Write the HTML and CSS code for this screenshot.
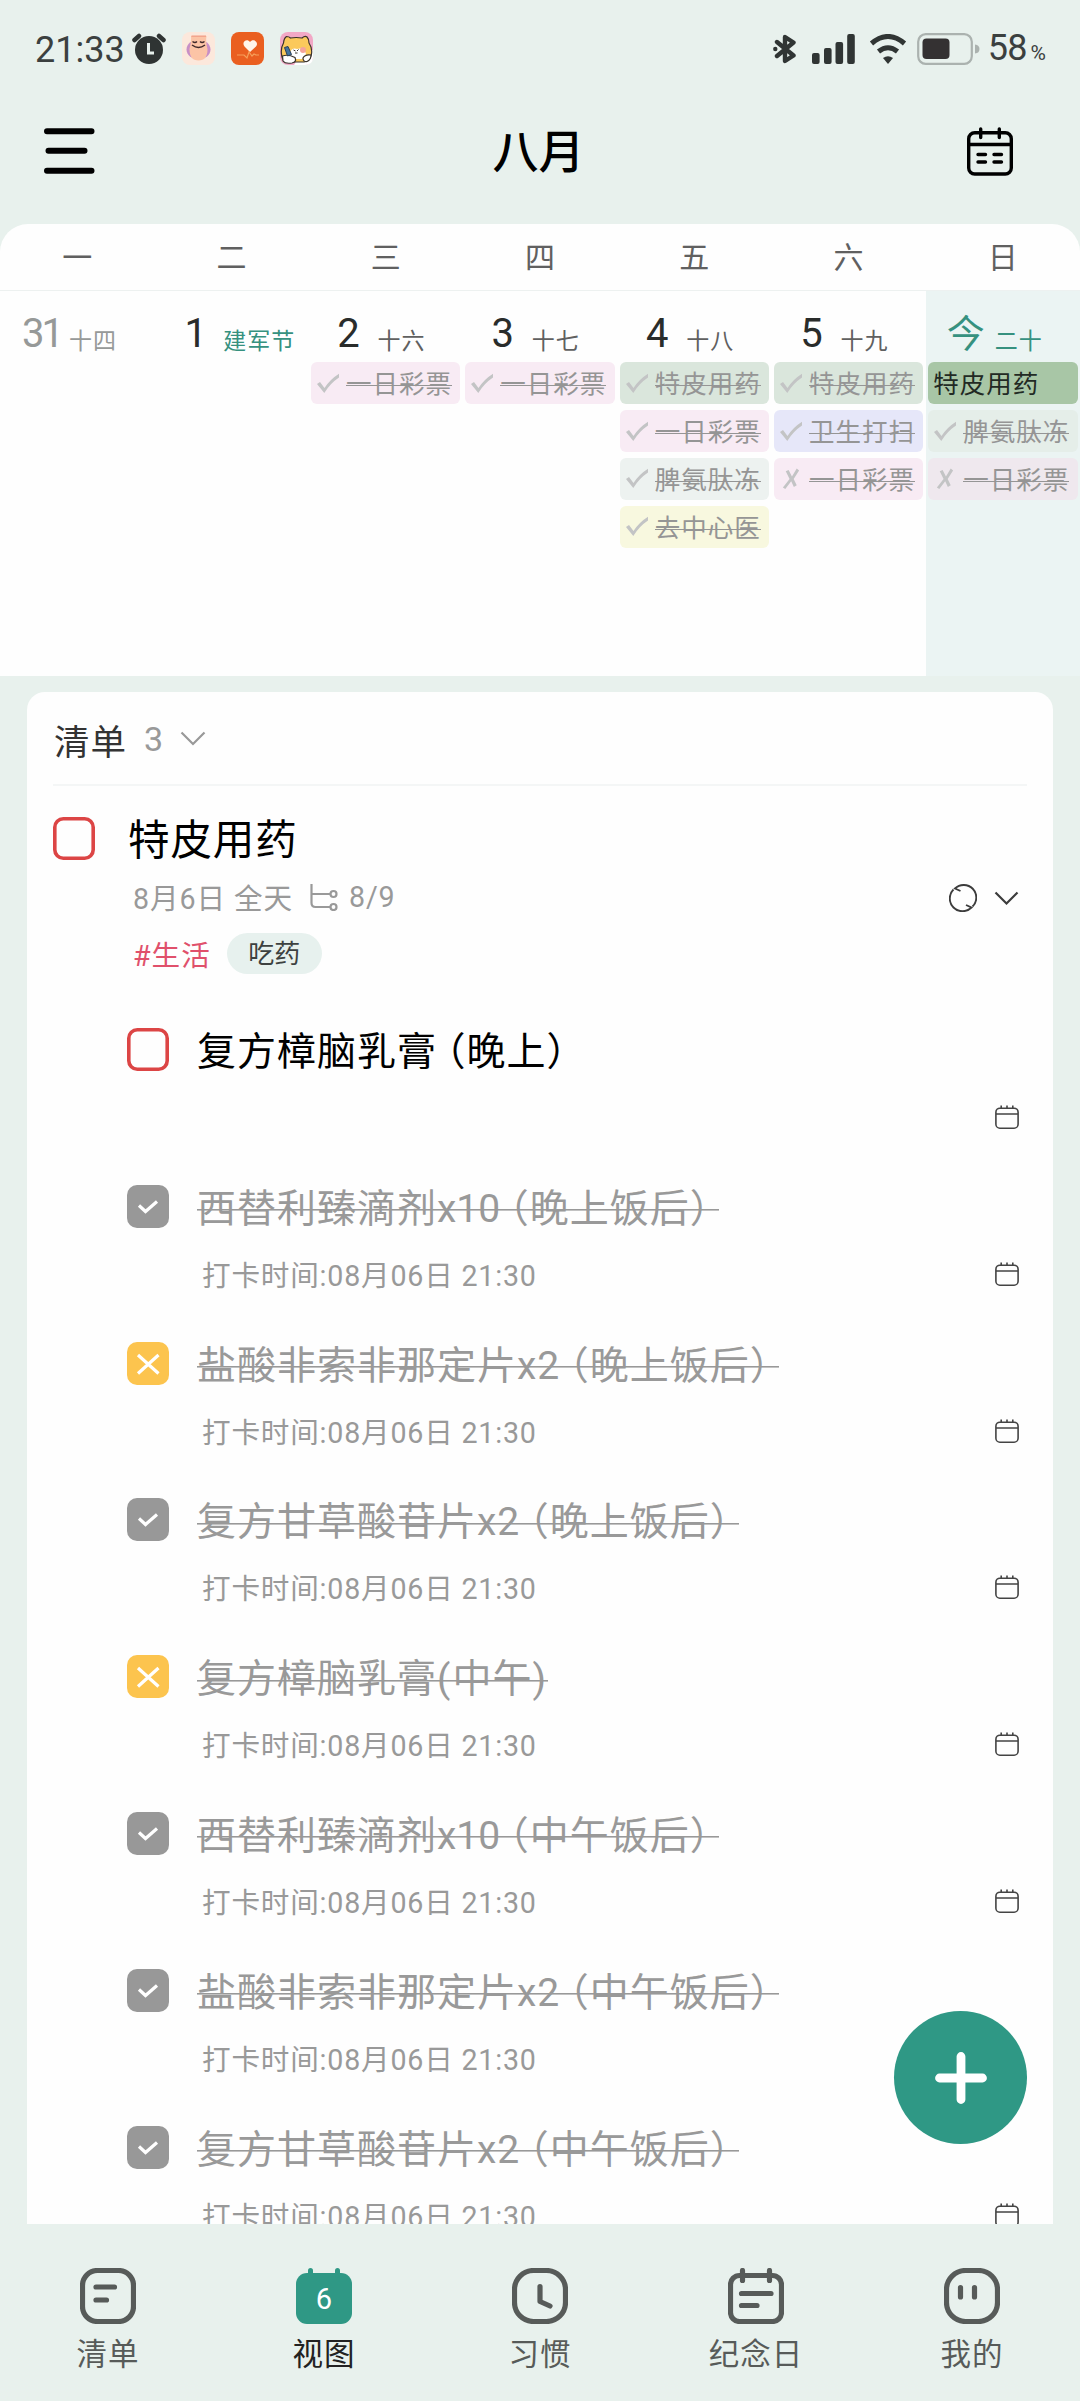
FILE: index.html
```html
<!DOCTYPE html>
<html lang="zh-CN">
<head>
<meta charset="utf-8">
<title>八月</title>
<link rel="stylesheet" href="styles.css">
</head>
<body>
<svg class="defs" width="0" height="0">
  <symbol id="tick" viewBox="0 0 24 20"><path d="M1 10.500 L4 8.500 L8.500 14.500 Q14 6 23 0.300 L23 4 Q14 10 8.300 19.500 Z"/></symbol>
  <symbol id="cross" viewBox="0 0 24 22"><path d="M6.500 3.500 L9.500 2 L13 9 L18 0.500 L20.500 2.500 L14.800 11.500 L18 18 L15 20 L12.200 14 L6 22 L3.500 20.500 L10.500 11.500 Z"/></symbol>
  <symbol id="cal" viewBox="0 0 24 24"><g fill="none" stroke="#444" stroke-width="1.600"><rect x="0.900" y="3.200" width="22.200" height="20" rx="4"/><path d="M1 9H23M6.200 0.500V3M12 0.500V3M17.800 0.500V3"/></g></symbol>
  <symbol id="box-check" viewBox="0 0 42 43"><rect width="42" height="43" rx="10" fill="#989898"/><path d="M12 20.500L18.500 26.500L30 16.500" fill="none" stroke="#fff" stroke-width="3.200"/></symbol>
  <symbol id="box-cross" viewBox="0 0 42 43"><rect width="42" height="43" rx="10" fill="#fcc44e"/><path d="M11 13L31.500 31.500M31.500 13L11 31.500" fill="none" stroke="#fff" stroke-width="3.200"/></symbol>
  <symbol id="box-open" viewBox="0 0 42 43"><rect x="1.800" y="1.800" width="38.400" height="39.400" rx="8.500" fill="none" stroke="#dc4545" stroke-width="3.600"/></symbol>
</svg>

<header class="status">
  <span class="clock">21:33</span>
  <svg class="alarm" width="34" height="32" viewBox="0 0 34 32"><circle cx="17" cy="17" r="14" fill="#2f3433"/><path d="M2.500 7L7 3M31.500 7L27 3" stroke="#2f3433" stroke-width="4.500" stroke-linecap="round"/><path d="M16.500 10V20H22" fill="none" stroke="#e8f1ed" stroke-width="3"/></svg>
  <svg class="app" width="33" height="33" viewBox="0 0 33 33"><rect width="33" height="33" rx="8" fill="#fce8dc"/><ellipse cx="16.500" cy="17.500" rx="12" ry="10" fill="#c88fc6"/><path d="M9 4H24.500Q23.500 9 25.500 17Q25.500 28.500 16.500 28.500T7.500 17Q9.500 9 9 4Z" fill="#fcc4a6"/><path d="M9.500 4.200H24" stroke="#f2a48c" stroke-width="1.500"/><path d="M10.500 9.500Q13 11.500 15 9.500M18 9.500Q20 11.500 22.500 9.500M10 13Q16.500 18 23 13" fill="none" stroke="#40292b" stroke-width="1.400"/></svg>
  <svg class="app" width="33" height="33" viewBox="0 0 33 33"><rect width="33" height="33" rx="8" fill="#ea5f20"/><path d="M19 20L13.500 14.500C10 10 16 6 19 10C22 6 28.500 10 25 14.500Z" fill="#fff5ea"/><path d="M6 23H13L16 26L18 20L21 24L23 22L25 23H28" fill="none" stroke="#f6a05a" stroke-width="1.200"/></svg>
  <svg class="app" width="33" height="33" viewBox="0 0 33 33"><rect width="33" height="33" rx="8" fill="#f2a8c6"/><path d="M14 33H25Q33 33 33 25V18L20 24Z" fill="#fff"/><path d="M2 25Q0 17 3.500 11Q4 6 6.500 4.500Q9 4.500 10.500 6Q16 5 22 6Q25 3.500 27 5Q29 7 29 11Q32.500 16 31.500 22Q30 29 24 30H7Q3 29 2 25Z" fill="#fbc95c" stroke="#39322c" stroke-width="1.200"/><path d="M9 22Q12 15 17 17Q24 15 26 22L22 27H10Z" fill="#fff"/><circle cx="23" cy="18" r="3" fill="#f5a49c"/><path d="M13.500 18L15.500 19M18.500 17.500L17 19M15 21H17.500" stroke="#39322c"/><path d="M2.500 24Q8 22 15 25.500Q17 30 12 31Q5 32 3 29ZM31 23Q25 22 23 26Q23 30 27 29.500Q31 28 31 23Z" fill="#fff" stroke="#39322c" stroke-width="1.200"/><path d="M4.500 15.500L8 14.500L11.500 22.500L7.500 24Z" fill="#44749f" stroke="#2d3f55"/></svg>
  <span class="grow"></span>
  <svg class="bt" width="24" height="30" viewBox="0 0 24 30"><path d="M4 8L20.500 21.500L12 27V3L20.500 8.500L4 22" fill="none" stroke="#303534" stroke-width="4.400" stroke-linejoin="round" stroke-linecap="round"/><circle cx="2.300" cy="15" r="2.200" fill="#303534"/></svg>
  <svg class="signal" width="44" height="30" viewBox="0 0 44 30" fill="#303534"><rect y="19" width="7.600" height="11" rx="2"/><rect x="12" y="14" width="7.600" height="16" rx="2"/><rect x="23.500" y="8" width="7.600" height="22" rx="2"/><rect x="35.200" width="7.600" height="30" rx="2"/></svg>
  <svg class="wifi" width="38" height="30" viewBox="0 0 38 30"><path d="M2.500 9.500Q19 -4.500 35.500 9.500M9.500 17.500Q19 10 28.500 17.500" fill="none" stroke="#303534" stroke-width="5"/><path d="M14 24Q19 20.500 24 24L19 30Z" fill="#303534"/></svg>
  <svg class="battery" width="63" height="32" viewBox="0 0 63 32"><rect x="1.200" y="1.200" width="53.600" height="29.600" rx="7.500" fill="none" stroke="#abb2af" stroke-width="2.200"/><rect x="5.500" y="5.500" width="27" height="20.500" rx="4" fill="#343132"/><path d="M58 11.500Q62.500 12 62.500 16T58 20.500Z" fill="#abb2af"/></svg>
  <span class="pct">58<small>%</small></span>
</header>

<div class="topbar">
  <svg width="51" height="46" viewBox="0 0 51 46"><path d="M3 3.300H47.500M4.500 22.700H40.500M3 42.700H47.500" stroke="#000" stroke-width="6" stroke-linecap="round"/></svg>
  <h1>八月</h1>
  <svg width="46" height="49" viewBox="0 0 46 49" fill="none" stroke="#000" stroke-width="3.400" stroke-linecap="round"><rect x="1.700" y="5.700" width="42.600" height="41.300" rx="6"/><path d="M2 17.500H44M13.700 2V10.500M32.300 2V10.500M11 27.500H18.500M27 27.500H34.500M11 35H18.500M27 35H34.500"/></svg>
</div>

<section class="calendar">
  <div class="weekdays"><span>一</span><span>二</span><span>三</span><span>四</span><span>五</span><span>六</span><span>日</span></div>
  <div class="days">
    <div class="day past"><div class="date"><b>31</b><i>十四</i></div></div>
    <div class="day festival"><div class="date"><b>1</b><i>建军节</i></div></div>
    <div class="day"><div class="date"><b>2</b><i>十六</i></div>
      <div class="chip pink"><svg><use href="#tick"/></svg><s>一日彩票</s></div></div>
    <div class="day"><div class="date"><b>3</b><i>十七</i></div>
      <div class="chip pink"><svg><use href="#tick"/></svg><s>一日彩票</s></div></div>
    <div class="day"><div class="date"><b>4</b><i>十八</i></div>
      <div class="chip green"><svg><use href="#tick"/></svg><s>特皮用药</s></div>
      <div class="chip pink"><svg><use href="#tick"/></svg><s>一日彩票</s></div>
      <div class="chip mist"><svg><use href="#tick"/></svg><s>脾氨肽冻</s></div>
      <div class="chip yellow"><svg><use href="#tick"/></svg><s>去中心医</s></div></div>
    <div class="day"><div class="date"><b>5</b><i>十九</i></div>
      <div class="chip green"><svg><use href="#tick"/></svg><s>特皮用药</s></div>
      <div class="chip blue"><svg><use href="#tick"/></svg><s>卫生打扫</s></div>
      <div class="chip pink"><svg><use href="#cross"/></svg><s>一日彩票</s></div></div>
    <div class="day today"><div class="date"><b>今</b><i>二十</i></div>
      <div class="chip open">特皮用药</div>
      <div class="chip mist"><svg><use href="#tick"/></svg><s>脾氨肽冻</s></div>
      <div class="chip pink"><svg><use href="#cross"/></svg><s>一日彩票</s></div></div>
  </div>
</section>

<main class="card">
  <div class="list-head"><span>清单</span><em>3</em><svg width="26" height="15" viewBox="0 0 26 15"><path d="M1.500 1.500L13 13L24.500 1.500" fill="none" stroke="#999" stroke-width="2.200"/></svg></div>
  <div class="task">
    <svg class="box"><use href="#box-open"/></svg>
    <div class="task-body">
      <div class="task-title">特皮用药</div>
      <div class="task-meta">
        <span class="lift">8月6日 全天</span>
        <svg width="28" height="27" viewBox="0 0 28 27" fill="none" stroke="#999" stroke-width="2.200"><path d="M1.500 0V19Q1.500 23 5.500 23H20M1.500 10H20"/><circle cx="23.500" cy="10" r="3"/><circle cx="23.500" cy="23" r="3"/></svg>
        <span class="lift">8/9</span>
        <span class="grow"></span>
        <svg width="28" height="28" viewBox="0 0 28 28" fill="none" stroke="#3c3c3c" stroke-width="1.900"><path d="M23.500 22.500A12.500 12.500 0 0 0 6 4.500L11.500 7M4.500 5.500A12.500 12.500 0 0 0 22.500 23.500L17 21"/></svg>
        <svg class="expand" width="25" height="15" viewBox="0 0 25 15"><path d="M1.500 1.500L12.500 12.500L23.500 1.500" fill="none" stroke="#3c3c3c" stroke-width="2.200"/></svg>
      </div>
      <div class="task-tags"><span>#生活</span><span class="pill">吃药</span></div>
    </div>
  </div>

  <div class="subs">
    <div class="sub open"><svg class="box"><use href="#box-open"/></svg><div class="sub-body"><p><span>复方樟脑乳膏<q>（</q>晚上<u>）</u></span></p><div class="sub-meta"><span></span><svg><use href="#cal"/></svg></div></div></div>
    <div class="sub"><svg class="box"><use href="#box-check"/></svg><div class="sub-body"><p><span>西替利臻滴剂<em>x10</em><q>（</q>晚上饭后<u>）</u></span></p><div class="sub-meta"><span>打卡时间:08月06日 21:30</span><svg><use href="#cal"/></svg></div></div></div>
    <div class="sub"><svg class="box"><use href="#box-cross"/></svg><div class="sub-body"><p><span>盐酸非索非那定片x2<q>（</q>晚上饭后<u>）</u></span></p><div class="sub-meta"><span>打卡时间:08月06日 21:30</span><svg><use href="#cal"/></svg></div></div></div>
    <div class="sub"><svg class="box"><use href="#box-check"/></svg><div class="sub-body"><p><span>复方甘草酸苷片x2<q>（</q>晚上饭后<u>）</u></span></p><div class="sub-meta"><span>打卡时间:08月06日 21:30</span><svg><use href="#cal"/></svg></div></div></div>
    <div class="sub"><svg class="box"><use href="#box-cross"/></svg><div class="sub-body"><p class="narrow"><span>复方樟脑乳膏<b>(</b>中午<b>)</b></span></p><div class="sub-meta"><span>打卡时间:08月06日 21:30</span><svg><use href="#cal"/></svg></div></div></div>
    <div class="sub"><svg class="box"><use href="#box-check"/></svg><div class="sub-body"><p><span>西替利臻滴剂<em>x10</em><q>（</q>中午饭后<u>）</u></span></p><div class="sub-meta"><span>打卡时间:08月06日 21:30</span><svg><use href="#cal"/></svg></div></div></div>
    <div class="sub"><svg class="box"><use href="#box-check"/></svg><div class="sub-body"><p><span>盐酸非索非那定片x2<q>（</q>中午饭后<u>）</u></span></p><div class="sub-meta"><span>打卡时间:08月06日 21:30</span><svg><use href="#cal"/></svg></div></div></div>
    <div class="sub"><svg class="box"><use href="#box-check"/></svg><div class="sub-body"><p><span>复方甘草酸苷片x2<q>（</q>中午饭后<u>）</u></span></p><div class="sub-meta"><span>打卡时间:08月06日 21:30</span><svg><use href="#cal"/></svg></div></div></div>
  </div>
</main>

<button class="fab" aria-label="添加"><svg width="52" height="52" viewBox="0 0 52 52"><path d="M26 4.500V47.500M4.500 26H47.500" stroke="#fff" stroke-width="8.800" stroke-linecap="round"/></svg></button>

<nav class="tabs">
  <a><svg viewBox="0 0 56 56"><rect x="2.500" y="2.500" width="51" height="51" rx="15"/><path d="M16 19H34.500M16 32H26.500"/></svg>清单</a>
  <a class="active"><span class="cal-tab">6</span>视图</a>
  <a><svg viewBox="0 0 56 56"><rect x="2.500" y="2.500" width="51" height="51" rx="19"/><path d="M28 18.500V33.500L38 38" stroke-linejoin="round"/></svg>习惯</a>
  <a><svg viewBox="0 0 56 56"><rect x="2.500" y="7.500" width="51" height="46" rx="9"/><path d="M14.500 2.500V12.500M41.500 2.500V12.500M13.500 25.500H43M13.500 37.500H29"/></svg>纪念日</a>
  <a><svg viewBox="0 0 56 56"><rect x="2.500" y="2.500" width="51" height="51" rx="19"/><path d="M16.500 19.500V29M30.500 19.500V29"/></svg>我的</a>
</nav>
</body>
</html>
```
FILE: styles.css
```css
* { box-sizing: border-box; margin: 0; padding: 0; }
body {
  position: relative;
  width: 1080px;
  height: 2401px;
  overflow: hidden;
  display: flex;
  flex-direction: column;
  background: #e8f1ed;
  font-family: Roboto, "Noto Sans CJK SC", sans-serif;
  color: #333;
}
svg { display: block; flex: none; }
b, i, em { font-style: normal; font-weight: 400; }
.defs { position: absolute; }
.grow { flex: 1; }

/* status bar */
.status {
  height: 97px;
  flex: none;
  display: flex;
  align-items: center;
  padding: 0 34px 0 35px;
  color: #3b403f;
}
.clock { width: 97px; font-size: 36px; letter-spacing: 0; line-height: 40px; padding-top: 3px; }
.app { margin-left: 16px; }
.signal { margin-left: 15px; }
.wifi { margin-left: 13px; }
.battery { margin-left: 10px; }
.pct { margin-left: 8px; font-size: 36px; letter-spacing: -0.800px; line-height: 40px; padding-top: 3px; }
.pct small { font-size: 21px; margin-left: 4px; letter-spacing: 0; }

/* title bar */
.topbar {
  height: 127px;
  flex: none;
  display: flex;
  align-items: flex-start;
  justify-content: space-between;
  padding: 30px 67px 0 44px;
}
.topbar > svg:first-child { margin-top: 1px; }
h1 { font-size: 46px; font-weight: 500; line-height: 50px; color: #000; padding-left: 15px; }

/* week calendar */
.calendar {
  height: 452px;
  flex: none;
  background: #fefefe;
  border-radius: 28px 28px 0 0;
  display: flex;
  flex-direction: column;
}
.weekdays {
  height: 67px;
  border-bottom: 1.500px solid #edf1f0;
  display: grid;
  grid-template-columns: repeat(7, 1fr);
  text-align: center;
  font-size: 30px;
  line-height: 68px;
  color: #606060;
}
.days { flex: 1; display: grid; grid-template-columns: repeat(7, 1fr); }
.day { padding: 0 2.500px; display: flex; flex-direction: column; gap: 5.800px; }
.date { height: 65.500px; display: grid; grid-template-columns: 40px 1fr; column-gap: 9px; padding-left: 17.500px; align-items: start; }
.date b { font-size: 40px; line-height: 48px; padding-top: 19px; text-align: center; color: #292c2b; }
.date i { font-size: 23px; letter-spacing: 1px; line-height: 30px; padding-top: 36px; color: #606060; white-space: nowrap; }
.past .date b { letter-spacing: -3px; padding-left: 2px; color: #969998; }
.past .date i { color: #969998; }
.festival .date i, .today .date i, .today .date b { color: #36917f; }
.festival .date b { padding-left: 3px; }
.today .date b { font-size: 38px; }
.today { background: #ebf4f3; }
.chip {
  height: 42px;
  border-radius: 6px;
  display: flex;
  align-items: center;
  padding: 2px 0 0 5px;
  color: #959595;
  font-size: 25.500px;
  letter-spacing: 1px;
  line-height: 40px;
  white-space: nowrap;
}
.chip svg { width: 24px; height: 21px; margin: -2px 6px 0 0; fill: #c3c4c5; }
.chip s { text-decoration: none; background: linear-gradient(#959595, #959595) 0 21px / 100% 1.200px no-repeat; }
.pink { background: #f8ebf4; }
.green { background: #dae6dc; }
.mist { background: #edf2f0; }
.blue { background: #e6e7f9; }
.yellow { background: #f8f8df; }
.today .mist { background: #e5eee9; }
.today .pink { background: #efe8ee; }
.open.chip { background: #a8c6a6; color: #222a24; }

/* list card */
.card {
  height: 1532px;
  flex: none;
  margin: 16px 27px 0;
  padding: 0 26px;
  background: #fefefe;
  border-radius: 18px 18px 0 0;
  overflow: hidden;
}
.list-head {
  height: 94px;
  border-bottom: 2px solid #f4f6f6;
  display: flex;
  align-items: center;
  padding: 2px 0 0 1px;
  font-size: 35.500px;
  letter-spacing: 1px;
}
.list-head em { margin-left: 17px; font-size: 34px; color: #999; }
.list-head svg { margin: -2px 0 0 16px; }
.box { width: 42px; height: 43px; }
.task { display: flex; padding-top: 31px; height: 242px; }
.task-body { flex: 1; padding-left: 33px; }
.task-title { font-size: 41.500px; letter-spacing: 0.900px; line-height: 46px; padding-top: 1px; color: #000; }
.task-meta {
  display: flex;
  align-items: center;
  height: 30px;
  margin-top: 20px;
  padding-left: 5px;
  font-size: 28.600px;
  letter-spacing: 0.900px;
  color: #999;
}
.task-meta .lift { padding-bottom: 5px; }
.task-meta > svg { margin-top: -2px; }
.task-meta > svg:nth-child(2) { margin: -3px 11px 0 17px; }
.task-meta .expand { margin: -2px 8px 0 17px; }
.task-tags {
  display: flex;
  align-items: center;
  height: 41px;
  margin-top: 19px;
  padding-left: 5px;
  gap: 16px;
  font-size: 28.600px;
  letter-spacing: 1px;
  color: #e0506b;
}
.task-tags .pill {
  width: 95px;
  height: 41px;
  line-height: 43px;
  border-radius: 21px;
  background: #e7f1ee;
  text-align: center;
  font-size: 26px;
  letter-spacing: 0;
  color: #3d4140;
}
.subs { padding-left: 74px; }
.sub { height: 156.800px; display: flex; }
.sub-body { flex: 1; padding-left: 28px; }
.sub p { height: 43px; font-size: 39px; letter-spacing: 1px; line-height: 49px; color: #999; white-space: nowrap; }
.sub p span { display: inline-block; background: linear-gradient(#999, #999) 0 24.500px / 100% 1.600px no-repeat; }
.sub.open p { color: #000; }
.sub.open p span { background: none; }
.sub p em { letter-spacing: 0; }
.sub p b { letter-spacing: 2px; }
/* fullwidth parentheses set on a narrower body */
.sub q, .sub u { font-feature-settings: "halt"; quotes: none; text-decoration: none; }
.sub q { padding-left: 9px; }
.sub u { padding-right: 8.500px; }
.sub-meta {
  display: flex;
  align-items: center;
  justify-content: space-between;
  height: 30px;
  margin-top: 32px;
  padding: 0 8px 0 5px;
  font-size: 28.600px;
  letter-spacing: 0.800px;
  color: #999;
}
.sub-meta span { padding-bottom: 3px; }
.sub-meta svg { width: 24px; height: 24px; margin-top: -2px; }

/* floating action button */
.fab {
  position: absolute;
  left: 894px;
  top: 2011px;
  width: 133px;
  height: 133px;
  border: 0;
  border-radius: 50%;
  background: #2f9885;
  display: flex;
  align-items: center;
  justify-content: center;
}

/* bottom tabs */
.tabs {
  flex: 1;
  display: grid;
  grid-template-columns: repeat(5, 1fr);
  padding-top: 44px;
  font-size: 30.500px;
  letter-spacing: 1px;
  color: #575b59;
}
.tabs a { display: flex; flex-direction: column; align-items: center; gap: 11px; line-height: 40px; }
.tabs svg { width: 56px; height: 56px; fill: none; stroke: #575b59; stroke-width: 5.200px; stroke-linecap: round; }
.tabs .active { color: #222; }
.cal-tab {
  position: relative;
  width: 56px;
  height: 51px;
  margin-top: 5px;
  border-radius: 11px;
  background: #2f9885;
  color: #fff;
  font-size: 29px;
  letter-spacing: 0;
  line-height: 52px;
  text-align: center;
}
.cal-tab::before, .cal-tab::after {
  content: "";
  position: absolute;
  top: -5px;
  width: 5px;
  height: 10px;
  border-radius: 3px;
  background: #2f9885;
}
.cal-tab::before { left: 12px; }
.cal-tab::after { right: 12px; }
```
